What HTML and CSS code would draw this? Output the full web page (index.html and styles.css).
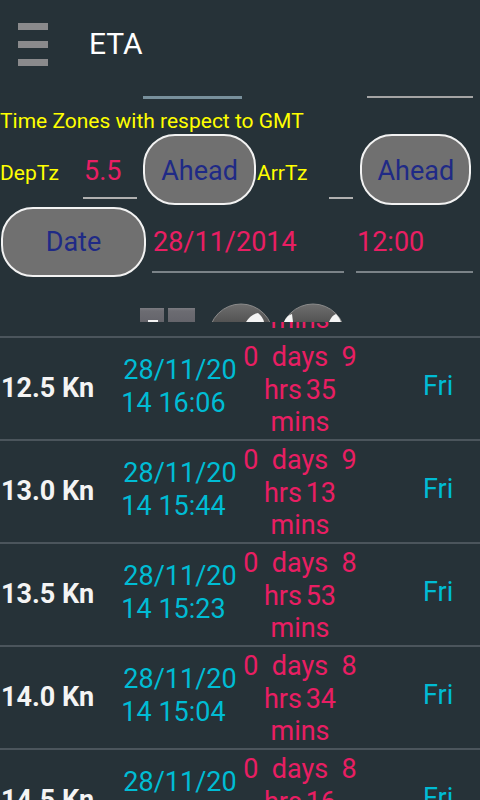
FILE: index.html
```html
<!DOCTYPE html>
<html>
<head>
<meta charset="utf-8">
<link rel="stylesheet" href="styles.css">
</head>
<body>
<div class="screen">
  <header class="appbar">
    <div class="menu"><span></span><span></span><span></span></div>
    <div class="title">ETA</div>
  </header>
  <div class="edit-row"><span class="uline u1"></span><span class="uline u2"></span></div>
  <div class="hint">Time Zones with respect to GMT</div>
  <div class="tz-row">
    <span class="label">DepTz</span>
    <span class="field f-dep">5.5</span>
    <span class="btn b-dep">Ahead</span>
    <span class="label l-arr">ArrTz</span>
    <span class="field f-arr">&nbsp;</span>
    <span class="btn b-arr">Ahead</span>
  </div>
  <div class="date-row">
    <span class="btn b-date">Date</span>
    <span class="field2 f-date">28/11/2014</span>
    <span class="field2 f-time">12:00</span>
  </div>
  <div class="picker">
    <svg class="picker-art" width="205" height="19" viewBox="0 0 205 19">
      <defs>
        <linearGradient id="sq" x1="0" y1="0" x2="0" y2="1">
          <stop offset="0" stop-color="#7c7c82"/>
          <stop offset="0.15" stop-color="#6c6c72"/>
          <stop offset="1" stop-color="#606067"/>
        </linearGradient>
        <linearGradient id="knob" x1="0" y1="0" x2="0" y2="1">
          <stop offset="0" stop-color="#6e6e6e"/>
          <stop offset="0.5" stop-color="#3e3e3e"/>
          <stop offset="1" stop-color="#2a2a2a"/>
        </linearGradient>
      </defs>
      <rect x="2" y="5" width="24" height="20" fill="url(#sq)"/>
      <rect x="10" y="17" width="10" height="3" fill="#f2f2f2"/>
      <rect x="30" y="5" width="27" height="20" fill="url(#sq)"/>
      <circle cx="103" cy="33" r="32" fill="url(#knob)" stroke="#8a8a8a" stroke-width="1"/>
      <path d="M108 19 Q113 11 120 10 Q125 14 126 19 Z" fill="#f4f4f4"/>
      <circle cx="175" cy="33" r="32" fill="url(#knob)" stroke="#8a8a8a" stroke-width="1"/>
      <path d="M146 19 Q149 12 154 11 L155 19 Z" fill="#f4f4f4"/>
      <path d="M191 19 Q194 12 198 11 Q202 15 203 19 Z" fill="#f4f4f4"/>
    </svg>
  </div>
  <div class="list">
    <div class="list-inner">
      <div class="row">
        <div class="speed">12.0 Kn</div>
        <div class="when"><div>28/11/20</div><div class="l2">14 16:31</div></div>
        <div class="dur"><div>0  days  9</div><div class="hrs">hrs 58</div><div>mins</div></div>
        <div class="day">Fri</div>
      </div>
      <div class="divider"></div>
      <div class="row">
        <div class="speed">12.5 Kn</div>
        <div class="when"><div>28/11/20</div><div class="l2">14 16:06</div></div>
        <div class="dur"><div>0  days  9</div><div class="hrs">hrs 35</div><div>mins</div></div>
        <div class="day">Fri</div>
      </div>
      <div class="divider"></div>
      <div class="row">
        <div class="speed">13.0 Kn</div>
        <div class="when"><div>28/11/20</div><div class="l2">14 15:44</div></div>
        <div class="dur"><div>0  days  9</div><div class="hrs">hrs 13</div><div>mins</div></div>
        <div class="day">Fri</div>
      </div>
      <div class="divider"></div>
      <div class="row">
        <div class="speed">13.5 Kn</div>
        <div class="when"><div>28/11/20</div><div class="l2">14 15:23</div></div>
        <div class="dur"><div>0  days  8</div><div class="hrs">hrs 53</div><div>mins</div></div>
        <div class="day">Fri</div>
      </div>
      <div class="divider"></div>
      <div class="row">
        <div class="speed">14.0 Kn</div>
        <div class="when"><div>28/11/20</div><div class="l2">14 15:04</div></div>
        <div class="dur"><div>0  days  8</div><div class="hrs">hrs 34</div><div>mins</div></div>
        <div class="day">Fri</div>
      </div>
      <div class="divider"></div>
      <div class="row">
        <div class="speed">14.5 Kn</div>
        <div class="when"><div>28/11/20</div><div class="l2">14 14:46</div></div>
        <div class="dur"><div>0  days  8</div><div class="hrs">hrs 16</div><div>mins</div></div>
        <div class="day">Fri</div>
      </div>
      <div class="divider"></div>
    </div>
  </div>
</div>
</body>
</html>
```
FILE: styles.css
```css
html, body {
  margin: 0;
  padding: 0;
  background: #263238;
}
.screen {
  width: 480px;
  height: 800px;
  overflow: hidden;
  background: #263238;
  font-family: "Roboto", "Liberation Sans", sans-serif;
  font-size: 27px;
}
.appbar {
  height: 88px;
  display: flex;
  align-items: center;
}
.menu {
  display: flex;
  flex-direction: column;
  gap: 11px;
  margin-left: 18px;
}
.menu span {
  display: block;
  width: 30px;
  height: 7px;
  background: #8a8a8c;
}
.title {
  color: #ffffff;
  font-size: 30px;
  margin-left: 41px;
  padding-bottom: 2px;
}
.edit-row {
  height: 21px;
  display: flex;
  align-items: flex-start;
}
.uline {
  display: block;
  margin-top: 8px;
}
.u1 {
  margin-left: 143px;
  width: 99px;
  height: 3px;
  background: #78909c;
}
.u2 {
  margin-left: 125px;
  width: 106px;
  height: 2px;
  background: #a4a4a4;
}
.hint {
  color: #ffff00;
  font-size: 21px;
  line-height: 24px;
  height: 24px;
}
.tz-row {
  margin-top: 1px;
  display: flex;
  align-items: baseline;
}
.label {
  color: #ffff00;
  font-size: 21px;
}
.l-arr {
  margin-left: 1px;
}
.field {
  color: #e91e63;
  padding-bottom: 10px;
  border-bottom: 2px solid #b0b0b0;
  box-sizing: border-box;
  padding-left: 1px;
}
.f-dep {
  margin-left: 24px;
  width: 54px;
}
.f-arr {
  margin-left: 22px;
  width: 24px;
}
.btn {
  display: block;
  box-sizing: border-box;
  background: #707070;
  border: 2px solid #f2f2f2;
  border-radius: 32px;
  color: #1f2a86;
  text-align: center;
}
.b-dep {
  margin-left: 6px;
  width: 113px;
  height: 71px;
  padding-top: 4px;
  line-height: 63px;
}
.b-arr {
  margin-left: 7px;
  width: 111px;
  height: 71px;
  padding-top: 4px;
  line-height: 63px;
}
.date-row {
  margin-top: 2px;
  height: 70px;
  display: flex;
  align-items: baseline;
}
.b-date {
  margin-left: 1px;
  width: 145px;
  height: 70px;
  line-height: 66px;
}
.field2 {
  color: #e91e63;
  padding-bottom: 13px;
  border-bottom: 2px solid #7b8388;
  box-sizing: border-box;
  padding-left: 1px;
}
.f-date {
  margin-left: 6px;
  width: 192px;
}
.f-time {
  margin-left: 12px;
  width: 117px;
}
.picker {
  height: 45px;
  overflow: hidden;
}
.picker-art {
  display: block;
  margin-left: 138px;
  margin-top: 26px;
}
.list {
  height: 478px;
  overflow: hidden;
}
.list-inner {
  margin-top: -87px;
}
.row {
  height: 101px;
  display: grid;
  grid-template-columns: 120px 120px 120px 120px;
  align-items: center;
  line-height: 32.5px;
}
.divider {
  height: 2px;
  background: #4b555c;
}
.speed {
  color: #f4f4f4;
  font-weight: 700;
  padding-left: 1px;
  white-space: nowrap;
}
.when {
  color: #00bcd4;
  text-align: center;
  padding-bottom: 4px;
  white-space: nowrap;
}
.when .l2 {
  padding-right: 13px;
}
.dur {
  color: #e91e63;
  text-align: center;
  white-space: pre;
  padding-top: 3px;
}
.dur .hrs {
  word-spacing: -3px;
}
.day {
  color: #00bcd4;
  padding-left: 63px;
  padding-bottom: 4px;
}
```
